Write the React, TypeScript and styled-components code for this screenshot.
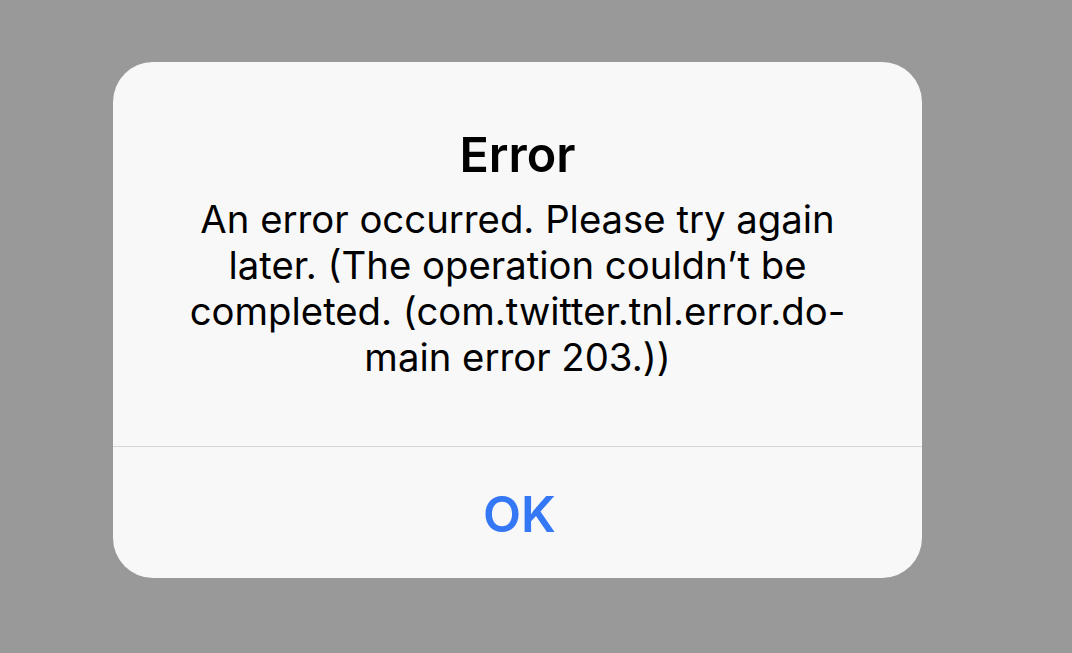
import React from "react";
import styled, { createGlobalStyle } from "styled-components";

const GlobalStyle = createGlobalStyle`
    html, body {
        margin: 0;
        padding: 0;
        background: #999999;
        font-family: "Inter", "Noto Sans", sans-serif;
    }
`;

const Screen = styled.div`
    width: 1072px;
    height: 653px;
    box-sizing: border-box;
    padding: 62px 0 0 113px;
    display: flex;
    align-items: flex-start;
`;

const Alert = styled.div`
    width: 809px;
    height: 516px;
    background: #f8f8f8;
    border-radius: 40px;
    display: flex;
    flex-direction: column;
    overflow: hidden;
`;

const Content = styled.div`
    height: 385px;
    box-sizing: border-box;
    padding: 69px 40px 0;
    display: flex;
    flex-direction: column;
    align-items: center;
    text-align: center;
    border-bottom: 1px solid #d6d6d6;
`;

const Title = styled.h1`
    margin: 0;
    font-size: 48.5px;
    font-weight: 600;
    line-height: 1;
    color: #000;
`;

const Message = styled.p`
    margin: 16px 0 0;
    font-size: 38.3px;
    font-weight: 400;
    line-height: 46.3px;
    color: #000;
`;

const Actions = styled.div`
    flex: 1;
    display: flex;
`;

const ActionButton = styled.button`
    flex: 1;
    border: none;
    background: transparent;
    font-family: inherit;
    font-size: 49.5px;
    font-weight: 600;
    color: #3478f6;
    padding: 2px 0 0 4px;
    cursor: pointer;
`;

const App: React.FC = () => {
    return (
        <>
            <GlobalStyle />
            <Screen>
                <Alert>
                    <Content>
                        <Title>Error</Title>
                        <Message>
                            An error occurred. Please try again
                            <br />
                            later. (The operation couldn’t be
                            <br />
                            completed. (com.twitter.tnl.error.do-
                            <br />
                            main error 203.))
                        </Message>
                    </Content>
                    <Actions>
                        <ActionButton>OK</ActionButton>
                    </Actions>
                </Alert>
            </Screen>
        </>
    );
};

export default App;
